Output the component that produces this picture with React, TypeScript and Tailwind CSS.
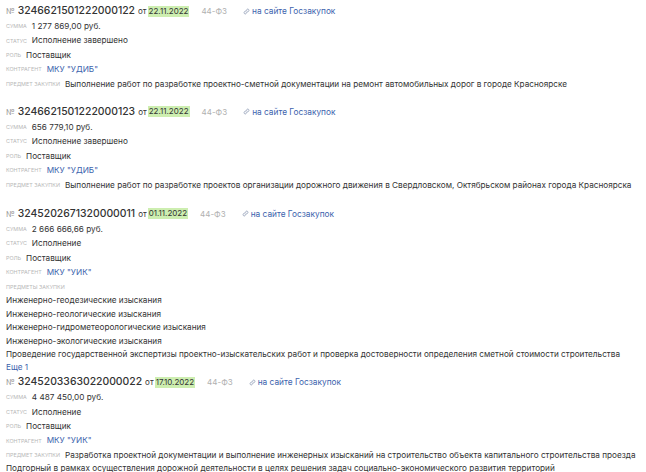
import React from "react";

type Contract = {
  number: string;
  date: string;
  sum: string;
  status: string;
  customer: string;
  subject?: string[];
  subjects?: string[];
  more?: string;
  gap: string;
};

const contracts: Contract[] = [
  {
    number: "3246621501222000122",
    date: "22.11.2022",
    sum: "1 277 869,00 руб.",
    status: "Исполнение завершено",
    customer: 'МКУ "УДИБ"',
    subject: [
      "Выполнение работ по разработке проектно-сметной документации на ремонт автомобильных дорог в городе Красноярске",
    ],
    gap: "pt-[3px]",
  },
  {
    number: "3246621501222000123",
    date: "22.11.2022",
    sum: "656 779,10 руб.",
    status: "Исполнение завершено",
    customer: 'МКУ "УДИБ"',
    subject: [
      "Выполнение работ по разработке проектов организации дорожного движения в Свердловском, Октябрьском районах города Красноярска",
    ],
    gap: "pt-[13px]",
  },
  {
    number: "3245202671320000011",
    date: "01.11.2022",
    sum: "2 666 666,66 руб.",
    status: "Исполнение",
    customer: 'МКУ "УИК"',
    subjects: [
      "Инженерно-геодезические изыскания",
      "Инженерно-геологические изыскания",
      "Инженерно-гидрометеорологические изыскания",
      "Инженерно-экологические изыскания",
      "Проведение государственной экспертизы проектно-изыскательских работ и проверка достоверности определения сметной стоимости строительства",
    ],
    more: "Еще 1",
    gap: "pt-[14px]",
  },
  {
    number: "3245203363022000022",
    date: "17.10.2022",
    sum: "4 487 450,00 руб.",
    status: "Исполнение",
    customer: 'МКУ "УИК"',
    subject: [
      "Разработка проектной документации и выполнение инженерных изысканий на строительство объекта капитального строительства проезда",
      "Подгорный в рамках осуществления дорожной деятельности в целях решения задач социально-экономического развития территорий",
    ],
    gap: "pt-0",
  },
];

// tiny grey caption before each value
const Label = ({ children }: { children: React.ReactNode }) => (
  <span className="text-[5.4px] uppercase text-[#b8b8b8] mr-[5px]">{children}</span>
);

function LinkIcon() {
  return (
    <svg width="7" height="7" viewBox="0 0 24 24" fill="none" stroke="#9aa6bd" strokeWidth="3" strokeLinecap="round" className="mr-[2px]">
      <path d="M10 14a4 4 0 0 0 5.7 0l3.5-3.5a4 4 0 0 0-5.7-5.7L12 6.3" />
      <path d="M14 10a4 4 0 0 0-5.7 0l-3.5 3.5a4 4 0 0 0 5.7 5.7L12 17.7" />
    </svg>
  );
}

function Row({ label, children }: { label: string; children: React.ReactNode }) {
  return (
    <div className="flex items-center h-[14.4px] whitespace-nowrap">
      <Label>{label}</Label>
      {children}
    </div>
  );
}

function ContractCard({ c }: { c: Contract }) {
  return (
    <div className={c.gap}>
      <div className="flex items-center h-[16px] whitespace-nowrap">
        <span className="text-[8px] text-[#9a9a9a] mr-[3px]">№</span>
        <span className="text-[10.4px] font-medium text-[#333]">{c.number}</span>
        <span className="text-[8px] text-[#333] ml-[3px] mr-[1px]">от</span>
        <span className="text-[8px] text-[#333] bg-[#cdeeb0] px-[1px] leading-[11px]">{c.date}</span>
        <span className="text-[8px] text-[#b0b0b0] ml-[12px]">44-ФЗ</span>
        <span className="flex items-center ml-[16px] text-[8.3px] text-[#3d63ad]">
          <LinkIcon />
          на сайте Госзакупок
        </span>
      </div>
      <Row label="Сумма">{c.sum}</Row>
      <Row label="Статус">{c.status}</Row>
      <Row label="Роль">Поставщик</Row>
      <Row label="Контрагент">
        <span className="text-[#3d63ad]">{c.customer}</span>
      </Row>
      {c.subject && c.subject.length === 1 && <Row label="Предмет закупки">{c.subject[0]}</Row>}
      {c.subject && c.subject.length > 1 && (
        <div className="whitespace-nowrap">
          <div className="flex items-center h-[14.4px]">
            <Label>Предмет закупки</Label>
            {c.subject[0]}
          </div>
          <div className="h-[12px] flex items-center">{c.subject[1]}</div>
        </div>
      )}
      {c.subjects && (
        <div className="whitespace-nowrap">
          <div className="flex items-center h-[14.4px]">
            <Label>Предметы закупки</Label>
          </div>
          {c.subjects.map((s) => (
            <div key={s} className="h-[13.4px] flex items-center">
              {s}
            </div>
          ))}
          <div className="h-[13.4px] flex items-center text-[#3d63ad]">{c.more}</div>
        </div>
      )}
    </div>
  );
}

export default function App() {
  return (
    <div
      className="w-[646px] h-[472px] overflow-hidden bg-white pl-[6px] text-[8.2px] text-[#333]"
      style={{ fontFamily: "Inter, 'Noto Sans', sans-serif" }}
    >
      {contracts.map((c) => (
        <ContractCard key={c.number} c={c} />
      ))}
    </div>
  );
}
